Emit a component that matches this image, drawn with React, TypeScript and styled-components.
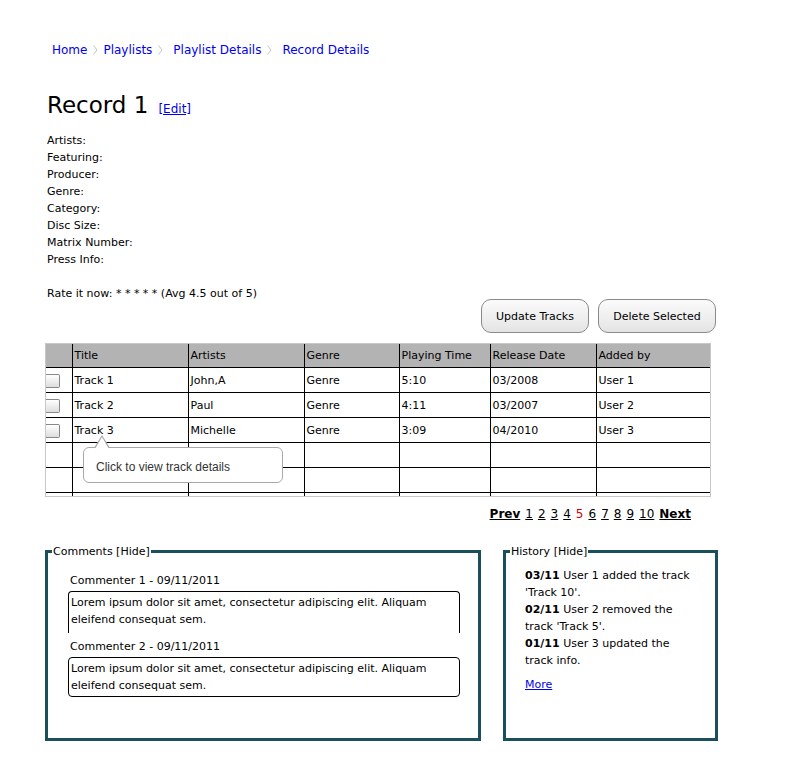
import styled, { createGlobalStyle } from 'styled-components';

const GlobalStyle = createGlobalStyle`
  body {
    margin: 0;
    background: #fff;
    font-family: "DejaVu Sans", sans-serif;
    color: #000;
  }
`;

const Page = styled.div`
  width: 800px;
  padding: 43px 0 0 45px;
  box-sizing: border-box;
`;

const Crumbs = styled.nav`
  display: flex;
  align-items: center;
  margin-left: 7px;
  font-size: 12px;
  a {
    color: #0000ee;
    text-decoration: none;
  }
`;

const Sep = styled.span<{ $w?: number }>`
  display: inline-flex;
  width: ${(p) => p.$w ?? 21}px;
  padding-left: 6px;
  box-sizing: border-box;
  svg {
    display: block;
  }
`;

const TitleRow = styled.div`
  display: flex;
  align-items: baseline;
  margin: 35px 0 0 2px;
`;

const Title = styled.h1`
  font-size: 23px;
  font-weight: normal;
  margin: 0;
`;

const EditLink = styled.a`
  font-size: 12px;
  color: #0000ee;
  text-decoration: underline;
  margin-left: 10px;
`;

const Fields = styled.div`
  margin: 14px 0 0 2px;
  font-size: 11px;
  line-height: 17px;
`;

const Rate = styled.div`
  margin: 17px 0 0 2px;
  font-size: 11px;
  line-height: 17px;
`;

const Actions = styled.div`
  display: flex;
  justify-content: flex-end;
  gap: 9px;
  width: 671px;
  margin-top: -3px;
`;

const Button = styled.button<{ w: number }>`
  width: ${(p) => p.w}px;
  height: 34px;
  border: 1px solid #8a8a8a;
  border-radius: 10px;
  background: linear-gradient(#fbfbfb, #e4e4e4);
  font-family: "DejaVu Sans", sans-serif;
  font-size: 11px;
  color: #000;
`;

const TableWrap = styled.div`
  position: relative;
  width: 666px;
  height: 154px;
  margin-top: 10px;
  border: 1px solid #c8c8c8;
  box-sizing: border-box;
`;

const Clip = styled.div`
  height: 100%;
  overflow: hidden;
`;

const Table = styled.table`
  border-collapse: collapse;
  table-layout: fixed;
  width: 665px;
  font-size: 11px;
  th, td {
    border-left: 1px solid #000;
    padding: 0 0 0 2px;
    text-align: left;
    white-space: nowrap;
  }
  th:first-child, td:first-child {
    border-left: none;
    padding: 0;
  }
  th {
    background: #b3b3b3;
    font-weight: normal;
    height: 23px;
    border-bottom: 1px solid #000;
  }
  td {
    height: 24px;
    border-bottom: 1px solid #000;
  }
`;

const Check = styled.span`
  display: block;
  width: 13px;
  height: 12px;
  border: 1px solid #888;
  border-left: none;
  border-radius: 0 2px 2px 0;
  background: linear-gradient(#fff, #ddd);
  margin-top: 2px;
`;

const Tip = styled.div`
  position: absolute;
  left: 37px;
  top: 103px;
  width: 200px;
  height: 36px;
  box-sizing: border-box;
  border: 1px solid #a8a8a8;
  border-radius: 6px;
  background: #fff;
  font-family: "Liberation Sans", Arial, sans-serif;
  font-size: 12px;
  color: #333;
  padding: 12px 0 0 12px;
  &::before, &::after {
    content: "";
    position: absolute;
    left: 10px;
    border-left: 8px solid transparent;
    border-right: 8px solid transparent;
  }
  &::before {
    top: -13px;
    border-bottom: 13px solid #a8a8a8;
  }
  &::after {
    top: -11px;
    left: 11px;
    border-left-width: 7px;
    border-right-width: 7px;
    border-bottom: 12px solid #fff;
  }
`;

const Pager = styled.div`
  display: flex;
  justify-content: flex-end;
  gap: 5px;
  width: 646px;
  margin-top: 10px;
  font-size: 12px;
`;

const PageLink = styled.a<{ $bold?: boolean; $current?: boolean }>`
  font-weight: ${(p) => (p.$bold ? 'bold' : 'normal')};
  color: ${(p) => (p.$current ? '#cc0000' : '#000')};
  text-decoration: ${(p) => (p.$current ? 'none' : 'underline')};
`;

const Panels = styled.div`
  display: flex;
  gap: 22px;
  margin-top: 24px;
`;

const Panel = styled.fieldset<{ w: number }>`
  width: ${(p) => p.w}px;
  height: 196px;
  box-sizing: border-box;
  margin: 0;
  border: 3px solid #1c4f5c;
  padding: 0;
  legend {
    font-size: 11px;
    padding: 0 1px;
    margin-left: 4px;
  }
`;

const CommentList = styled.div`
  padding: 15px 18px 0 20px;
`;

const Commenter = styled.div`
  font-size: 11px;
  line-height: 16px;
  margin-left: 2px;
`;

const CommentBox = styled.div<{ $open?: boolean }>`
  border: 1px solid #000;
  border-bottom: ${(p) => (p.$open ? 'none' : '1px solid #000')};
  border-radius: ${(p) => (p.$open ? '4px 4px 0 0' : '4px')};
  font-size: 11px;
  line-height: 17px;
  padding: 2px 0 2px 2px;
  height: ${(p) => (p.$open ? '42px' : 'auto')};
  box-sizing: border-box;
  margin: 2px 0 ${(p) => (p.$open ? '6px' : '0')};
`;

const HistoryList = styled.div`
  padding: 9px 10px 0 19px;
  font-size: 11px;
  line-height: 17px;
  white-space: nowrap;
`;

const MoreLink = styled.a`
  display: inline-block;
  margin-top: 7px;
  color: #0000ee;
  text-decoration: underline;
`;

const Chevron = () => (
  <svg width="5" height="10" viewBox="0 0 5 10">
    <path d="M0.5 0.5 L4 5 L0.5 9.5" fill="none" stroke="#c4c4c4" strokeWidth="1" />
  </svg>
);

const fields = ['Artists:', 'Featuring:', 'Producer:', 'Genre:', 'Category:', 'Disc Size:', 'Matrix Number:', 'Press Info:'];

const tracks = [
  ['Track 1', 'John,A', 'Genre', '5:10', '03/2008', 'User 1'],
  ['Track 2', 'Paul', 'Genre', '4:11', '03/2007', 'User 2'],
  ['Track 3', 'Michelle', 'Genre', '3:09', '04/2010', 'User 3'],
  ['', '', '', '', '', ''],
  ['', '', '', '', '', ''],
  ['', '', '', '', '', ''],
];

const widths = [26, 116, 116, 95, 91, 106, 115];

function App() {
  return (
    <Page>
      <GlobalStyle />
      <Crumbs>
        <a href="#">Home</a><Sep $w={16}><Chevron /></Sep>
        <a href="#">Playlists</a><Sep><Chevron /></Sep>
        <a href="#">Playlist Details</a><Sep><Chevron /></Sep>
        <a href="#">Record Details</a>
      </Crumbs>

      <TitleRow>
        <Title>Record 1</Title>
        <EditLink href="#">[Edit]</EditLink>
      </TitleRow>

      <Fields>
        {fields.map((f) => <div key={f}>{f}</div>)}
      </Fields>
      <Rate>Rate it now: * * * * * (Avg 4.5 out of 5)</Rate>

      <Actions>
        <Button w={108}>Update Tracks</Button>
        <Button w={118}>Delete Selected</Button>
      </Actions>

      <TableWrap>
        <Clip>
          <Table>
            <colgroup>
              {widths.map((w, i) => <col key={i} style={{ width: w }} />)}
            </colgroup>
            <thead>
              <tr>
                <th></th>
                <th>Title</th>
                <th>Artists</th>
                <th>Genre</th>
                <th>Playing Time</th>
                <th>Release Date</th>
                <th>Added by</th>
              </tr>
            </thead>
            <tbody>
              {tracks.map((t, i) => (
                <tr key={i}>
                  <td>{t[0] && <Check />}</td>
                  {t.map((c, j) => <td key={j}>{c}</td>)}
                </tr>
              ))}
            </tbody>
          </Table>
        </Clip>
        <Tip>Click to view track details</Tip>
      </TableWrap>

      <Pager>
        <PageLink href="#" $bold>Prev</PageLink>
        {[1, 2, 3, 4, 5, 6, 7, 8, 9, 10].map((n) => (
          <PageLink href="#" key={n} $current={n === 5}>{n}</PageLink>
        ))}
        <PageLink href="#" $bold>Next</PageLink>
      </Pager>

      <Panels>
        <Panel w={436}>
          <legend>Comments [Hide]</legend>
          <CommentList>
            <Commenter>Commenter 1 - 09/11/2011</Commenter>
            <CommentBox $open>
              Lorem ipsum dolor sit amet, consectetur adipiscing elit. Aliquam eleifend consequat sem.
            </CommentBox>
            <Commenter>Commenter 2 - 09/11/2011</Commenter>
            <CommentBox>
              Lorem ipsum dolor sit amet, consectetur adipiscing elit. Aliquam eleifend consequat sem.
            </CommentBox>
          </CommentList>
        </Panel>
        <Panel w={215}>
          <legend>History [Hide]</legend>
          <HistoryList>
            <div><b>03/11</b> User 1 added the track<br />'Track 10'.</div>
            <div><b>02/11</b> User 2 removed the<br />track 'Track 5'.</div>
            <div><b>01/11</b> User 3 updated the<br />track info.</div>
            <MoreLink href="#">More</MoreLink>
          </HistoryList>
        </Panel>
      </Panels>
    </Page>
  );
}

export default App;
